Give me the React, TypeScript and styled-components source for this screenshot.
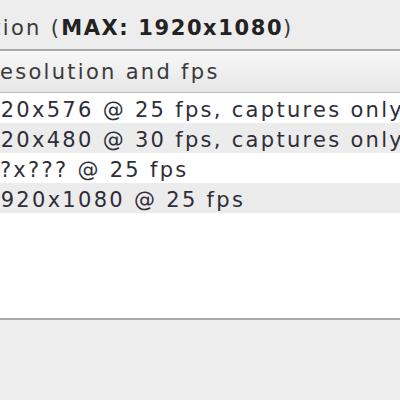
import React from 'react';
import { createGlobalStyle, styled } from 'styled-components';

const GlobalStyle = createGlobalStyle`
  html, body {
    margin: 0;
    padding: 0;
    background: #ededed;
  }
`;

const modes = [
  '720x576 @ 25 fps, captures only PAL',
  '720x480 @ 30 fps, captures only NTSC',
  '???x??? @ 25 fps',
  '1920x1080 @ 25 fps',
];

const App = () => {
  return (
    <>
      <GlobalStyle />
      <Style.Page>
        <Style.Title>
          Resolution (<b>MAX: 1920x1080</b>)
        </Style.Title>
        <Style.ListBox>
          <Style.Header>Resolution and fps</Style.Header>
          <Style.Body>
            {modes.map((mode, idx) => (
              <Style.Row
                key={'mode-' + idx}
                $odd={idx % 2 === 1}
                $indent={mode.startsWith('?') ? -27 : -15}
              >
                {mode}
              </Style.Row>
            ))}
          </Style.Body>
        </Style.ListBox>
      </Style.Page>
    </>
  );
};

export default App;

const Style = {
  Page: styled.div`
    width: 400px;
    height: 400px;
    overflow: hidden;
    background: #ededed;
    display: flex;
    flex-direction: column;
    font-family: 'DejaVu Sans', sans-serif;
    font-size: 21px;
    letter-spacing: 2.3px;
    color: #3a3a3a;
  `,
  Title: styled.div`
    height: 49px;
    display: flex;
    align-items: center;
    padding-top: 7px;
    box-sizing: border-box;
    white-space: nowrap;
    margin-left: -91px;

    b {
      color: #222;
      font-weight: 700;
      letter-spacing: 1.6px;
    }
  `,
  ListBox: styled.div`
    border-top: 2px solid #a9a9a9;
    border-bottom: 2px solid #a9a9a9;
    display: flex;
    flex-direction: column;
  `,
  Header: styled.div`
    height: 41px;
    display: flex;
    align-items: center;
    white-space: nowrap;
    margin-left: -16px;
    padding-right: 16px;
    background: linear-gradient(#f8f8f8, #e6e6e6);
    border-bottom: 1px solid #bdbdbd;
  `,
  Body: styled.div`
    height: 225px;
    background: #fff;
    display: flex;
    flex-direction: column;
  `,
  Row: styled.div<{ $odd: boolean; $indent: number }>`
    height: 30px;
    flex-shrink: 0;
    display: flex;
    align-items: center;
    padding-top: 4px;
    box-sizing: border-box;
    white-space: nowrap;
    overflow: hidden;
    text-indent: ${({ $indent }) => $indent}px;
    background: ${({ $odd }) => ($odd ? '#ececec' : '#fff')};
    color: #2e2e3a;
  `,
};
